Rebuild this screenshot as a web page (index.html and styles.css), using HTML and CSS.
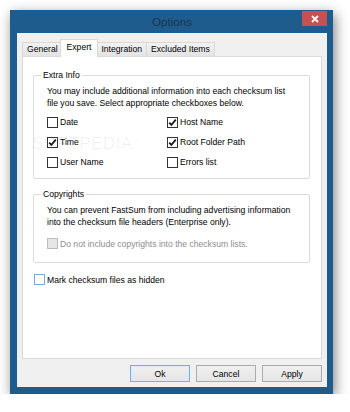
FILE: index.html
```html
<!DOCTYPE html>
<html lang="en">
<head>
  <meta charset="UTF-8" />
  <title>Options</title>
  <link rel="stylesheet" href="styles.css">
</head>
<body>

  <div class="window">
    <div class="titlebar">
      <span class="title">Options</span>
      <button class="close" aria-label="Close">
        <svg width="8" height="8" viewBox="0 0 8 8"><path d="M1 1L7 7M7 1L1 7" stroke="#fff" stroke-width="1.8"/></svg>
      </button>
    </div>

    <div class="client">
      <div class="tabs">
        <div class="tab">General</div>
        <div class="tab active">Expert</div>
        <div class="tab">Integration</div>
        <div class="tab">Excluded Items</div>
      </div>

      <div class="panel">
        <fieldset class="group">
          <legend>Extra Info</legend>
          <p class="desc">You may include additional information into each checksum list<br>file you save. Select appropriate checkboxes below.</p>
          <div class="checks">
            <label class="check"><span class="box"></span>Date</label>
            <label class="check"><span class="box"><svg width="9" height="9" viewBox="0 0 9 9"><path d="M1.2 4.6L3.4 6.9L7.8 1.6" fill="none" stroke="#1a1a1a" stroke-width="1.7"/></svg></span>Host Name</label>
            <label class="check"><span class="box"><svg width="9" height="9" viewBox="0 0 9 9"><path d="M1.2 4.6L3.4 6.9L7.8 1.6" fill="none" stroke="#1a1a1a" stroke-width="1.7"/></svg></span>Time</label>
            <label class="check"><span class="box"><svg width="9" height="9" viewBox="0 0 9 9"><path d="M1.2 4.6L3.4 6.9L7.8 1.6" fill="none" stroke="#1a1a1a" stroke-width="1.7"/></svg></span>Root Folder Path</label>
            <label class="check"><span class="box"></span>User Name</label>
            <label class="check"><span class="box"></span>Errors list</label>
          </div>
        </fieldset>

        <fieldset class="group copyrights">
          <legend>Copyrights</legend>
          <p class="desc">You can prevent FastSum from including advertising information<br>into the checksum file headers (Enterprise only).</p>
          <label class="check disabled"><span class="box"></span>Do not include copyrights into the checksum lists.</label>
        </fieldset>

        <label class="check hidden-files"><span class="box focus"></span>Mark checksum files as hidden</label>
      </div>

      <div class="buttons">
        <button class="btn default">Ok</button>
        <button class="btn">Cancel</button>
        <button class="btn">Apply</button>
      </div>
    </div>

    <div class="watermark">SOFTPEDIA<sup>™</sup></div>
  </div>

</body>
</html>
```

FILE: styles.css
```css
* { box-sizing: border-box; }

body {
  margin: 0;
  background: #fff;
  font-family: "Liberation Sans", Arial, sans-serif;
  font-size: 8.6px;
  color: #000;
}

.window {
  position: relative;
  width: 323px;
  margin: 10px 0 0 10px;
  padding: 0 6px 7px 7px;
  background: #1d5c8c;
  box-shadow: 2px 4px 12px rgba(0, 0, 0, 0.5);
}

.titlebar {
  height: 23px;
  display: grid;
  grid-template-columns: 1fr auto 1fr;
  align-items: start;
}

.title {
  grid-column: 2;
  font-size: 11.6px;
  line-height: 23px;
  color: #1a3450;
}

.close {
  grid-column: 3;
  justify-self: end;
  width: 25px;
  height: 15px;
  margin-top: 1px;
  padding: 0;
  border: none;
  background: #c75050;
  display: flex;
  align-items: center;
  justify-content: center;
}

.client {
  background: #f0f0f0;
  padding: 0 5px 5px 5px;
}

/* tab strip */
.tabs {
  display: flex;
  align-items: flex-end;
  padding-top: 6px;
}

.tab {
  height: 14px;
  padding: 0 4px;
  border: 1px solid #d9d9d9;
  border-bottom: none;
  background: linear-gradient(#f2f2f2, #e3e3e3);
  line-height: 13px;
  margin-right: -1px;
}

.tab.active {
  height: 18px;
  margin: 0 -2px -1px -2px;
  padding: 0 6px;
  background: #fff;
  line-height: 15px;
  position: relative;
  z-index: 1;
}

.panel {
  height: 303px;
  background: #fff;
  border: 1px solid #d9d9d9;
  padding: 12px 11px 0 10px;
}

.group {
  margin: 0;
  min-width: 0;
  padding: 5px 10px 6px 13px;
  border: 1px solid #dcdcdc;
  border-radius: 2px;
}

.group legend {
  padding: 0 2px;
  margin-left: -6px;
  line-height: 12px;
}

.desc {
  margin: 0;
  line-height: 11.7px;
}

.checks {
  display: grid;
  grid-template-columns: 120px 1fr;
  grid-auto-rows: 20px;
  margin-top: 3px;
}

.check {
  display: flex;
  align-items: center;
  height: 20px;
}

.box {
  width: 11px;
  height: 11px;
  margin-right: 2px;
  border: 1px solid #333;
  background: #fff;
  display: flex;
  align-items: center;
  justify-content: center;
}

.copyrights {
  margin-top: 9px;
  padding-bottom: 8px;
}

.copyrights .check {
  margin-top: 5px;
}

.check.disabled {
  color: #8d8d8d;
}

.check.disabled .box {
  border-color: #bcbcbc;
  background: #e6e6e6;
}

.hidden-files {
  margin: 7px 0 0 1px;
}

.box.focus {
  border-color: #7ba9d9;
}

.buttons {
  display: flex;
  justify-content: flex-end;
  gap: 6px;
  margin-top: 6px;
}

.btn {
  width: 60px;
  height: 17px;
  padding: 0;
  border: 1px solid #acacac;
  background: linear-gradient(#f0f0f0, #e5e5e5);
  font: inherit;
  color: #000;
}

.btn.default {
  border-color: #78aee5;
  box-shadow: inset 0 0 0 1px #dcebf9;
}

/* faint site watermark over the dialog */
.watermark {
  position: absolute;
  left: 22px;
  top: 122px;
  font-size: 17px;
  line-height: 17px;
  letter-spacing: 0.5px;
  color: rgba(0, 0, 0, 0.06);
}

.watermark sup {
  font-size: 6px;
}
```
